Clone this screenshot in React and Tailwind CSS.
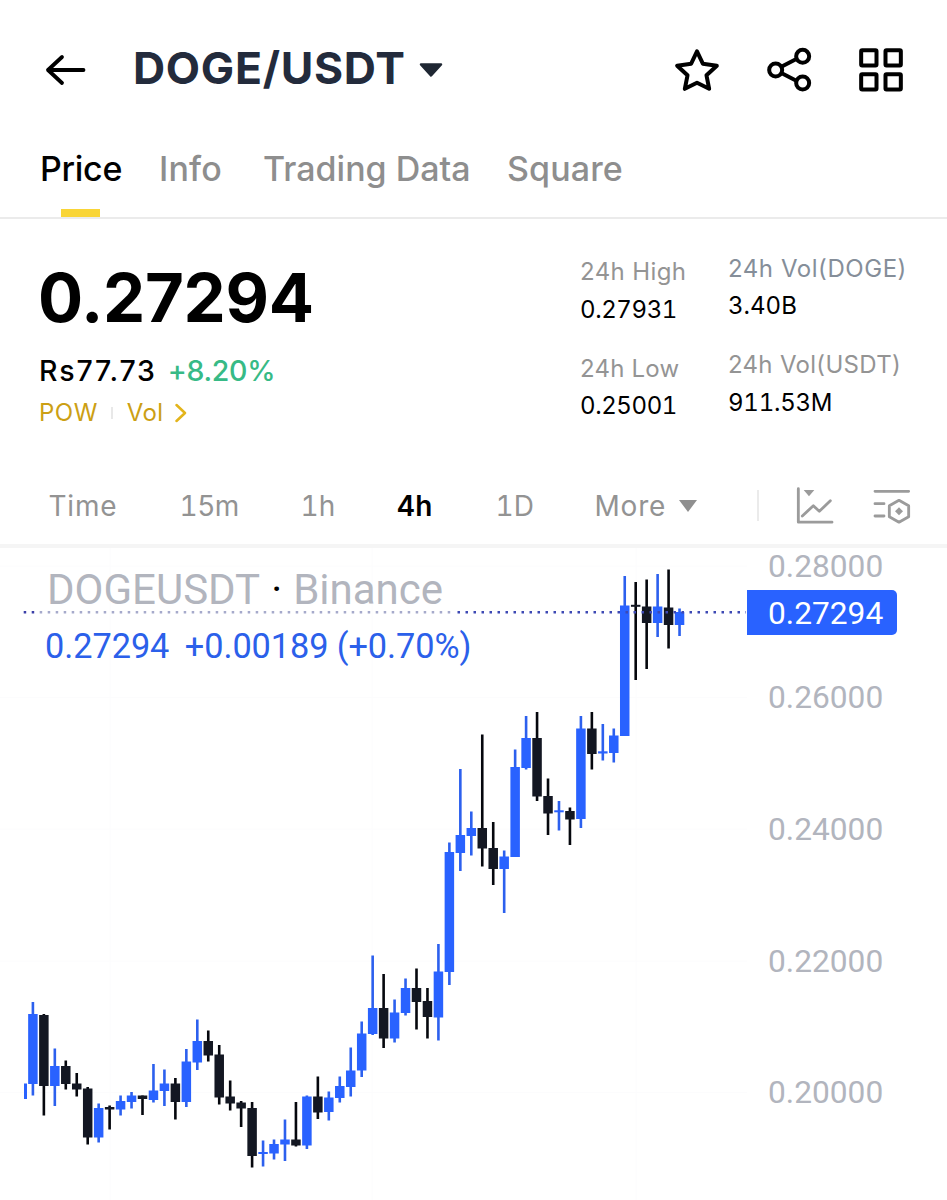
import React from 'react';

const BLUE = '#2962ff';
const BLACK = '#131722';

// [direction, bodyTop, bodyBottom, wickTop, wickBottom]
const CANDLES = [
  ['u', 1014, 1084, 1002, 1095.5],
  ['d', 1015, 1086, 1014, 1115.5],
  ['u', 1066, 1086, 1048.5, 1106],
  ['d', 1066, 1084, 1060.5, 1089.5],
  ['d', 1083.5, 1089.5, 1073, 1096.5],
  ['d', 1088.5, 1137.5, 1087, 1144.5],
  ['u', 1108, 1137.5, 1103.5, 1142.5],
  ['d', 1107, 1109.5, 1105.5, 1129.5],
  ['u', 1101, 1109.5, 1095.5, 1115.5],
  ['u', 1095.5, 1102, 1092, 1108.5],
  ['d', 1095.5, 1099, 1095.5, 1115],
  ['u', 1090.5, 1100, 1064, 1102.5],
  ['u', 1083.5, 1091, 1069.5, 1106],
  ['d', 1083.5, 1102, 1078, 1119.5],
  ['u', 1061.5, 1102, 1049, 1107],
  ['u', 1041, 1062.5, 1019.5, 1070],
  ['d', 1041, 1055.5, 1030.5, 1061.5],
  ['d', 1054.5, 1097.5, 1045, 1104.5],
  ['d', 1096.5, 1103.5, 1080.5, 1110.5],
  ['d', 1102.5, 1108.5, 1101, 1127],
  ['d', 1108, 1156, 1102, 1167.5],
  ['u', 1152, 1154, 1140.5, 1166.5],
  ['u', 1144, 1153.5, 1139.5, 1159.5],
  ['u', 1139.5, 1144.5, 1119.5, 1161],
  ['d', 1139.5, 1145.5, 1102, 1146.5],
  ['u', 1096.5, 1145.5, 1095.5, 1149],
  ['d', 1096.5, 1112.5, 1076.5, 1119],
  ['u', 1097.5, 1112, 1091.5, 1120.5],
  ['u', 1086, 1098, 1076.5, 1102.5],
  ['u', 1070.5, 1087, 1047.5, 1096.5],
  ['u', 1033.5, 1070.5, 1021.5, 1077],
  ['u', 1008, 1034, 955.5, 1035],
  ['d', 1008, 1038.5, 974, 1048],
  ['u', 1012.5, 1038.5, 999.5, 1042.5],
  ['u', 988, 1013, 978.5, 1015.5],
  ['d', 988, 1002, 968.5, 1029.5],
  ['d', 1001, 1017, 988, 1038.5],
  ['u', 971.5, 1017.5, 944, 1040.5],
  ['u', 852, 972, 842.5, 985],
  ['u', 835, 853, 769, 871],
  ['u', 828, 836, 811.5, 855.5],
  ['d', 828, 848.5, 734.5, 866.5],
  ['d', 848, 869, 822, 885],
  ['u', 856.5, 869, 850.5, 913],
  ['u', 767, 857, 749.5, 857],
  ['u', 738, 768, 716, 769.5],
  ['d', 738, 796.5, 712, 801],
  ['d', 796, 813.5, 778.5, 835],
  ['u', 810.3, 812.3, 801, 830.5],
  ['d', 811, 819.5, 807.5, 845],
  ['u', 728.5, 819, 716, 828],
  ['d', 728.5, 754, 712, 769.5],
  ['u', 751.3, 753.5, 724, 760.5],
  ['u', 735.5, 753, 728.5, 762.5],
  ['u', 605.5, 736, 576, 736],
  ['d', 604.8, 606.8, 582, 680],
  ['d', 606.5, 623, 579.5, 669],
  ['u', 606.5, 623, 574, 637],
  ['d', 607.5, 625, 569.5, 648.5],
  ['u', 612, 625, 608.5, 636],
];

function Header() {
  return (
    <header className="flex h-[140px] items-center pl-11 pr-[43px]">
      <svg className="h-10 w-11 shrink-0" viewBox="44 50 44 40" fill="none" stroke="#000" strokeWidth="3.8" strokeLinecap="round" strokeLinejoin="round">
        <path d="M83.5 70H48M62 57L48 70L62 83" />
      </svg>
      <div className="flex w-[355px] items-center pl-[45px]">
        <h1 className="w-[274px] whitespace-nowrap pb-1 text-[44.500px] font-bold leading-[60px] tracking-[0.700px] text-[#232b3c]">DOGE/USDT</h1>
        <svg className="ml-3 h-4 w-6 shrink-0" viewBox="0 0 24 16" fill="#1f2733" stroke="#1f2733" strokeWidth="2.5" strokeLinejoin="round">
          <path d="M2 2.500H22L12 13.500Z" />
        </svg>
      </div>
      <div className="ml-auto flex items-center gap-[46px]">
        <svg className="h-[46px] w-[46px]" viewBox="582 82 138 138" fill="none" stroke="#000" strokeWidth="12" strokeLinejoin="round">
          <path d="M651 95L668.500 132L710.500 138L679.500 167L687.500 207.500L651 189L614.500 207.500L622.500 167L591.500 138L633.500 132Z" />
        </svg>
        <svg className="h-[46px] w-[46px]" viewBox="858 82 138 138" fill="none" stroke="#000" strokeWidth="12">
          <circle cx="887" cy="151" r="19.500" />
          <circle cx="968" cy="110" r="19.500" />
          <circle cx="968" cy="190" r="19.500" />
          <path d="M904 141L949 118M904 160L949 183" />
        </svg>
        <svg className="h-[46px] w-[46px]" viewBox="1135 82 138 138" fill="none" stroke="#000" strokeWidth="12">
          <rect x="1144.500" y="91.500" width="46" height="46" rx="3" />
          <rect x="1217.500" y="91.500" width="46" height="46" rx="3" />
          <rect x="1144.500" y="163.500" width="46" height="46" rx="3" />
          <rect x="1217.500" y="163.500" width="46" height="46" rx="3" />
        </svg>
      </div>
    </header>
  );
}

function Tabs() {
  return (
    <nav className="grid h-[79px] grid-cols-[119px_104px_244px_1fr] border-b-2 border-[#ebebeb] pl-[40px] text-[34px] font-medium leading-[57px] text-[#8e8e8e]">
      <div className="flex flex-col">
        <span className="tracking-[-0.300px] text-black">Price</span>
        <span className="ml-[20.500px] mt-3 h-2 w-[39.500px] bg-[#f9d537]" />
      </div>
      <span className="tracking-[0.2px]">Info</span>
      <span>Trading Data</span>
      <span className="tracking-[0.100px]">Square</span>
    </nav>
  );
}

function Stat({ label, value, labelClass, valueClass }) {
  return (
    <div className="flex h-[96.500px] flex-col gap-[7.500px] whitespace-nowrap text-[24px] leading-[30px]">
      <span className={labelClass}>{label}</span>
      <span className={'text-black tabular-nums ' + valueClass}>{value}</span>
    </div>
  );
}

function Summary() {
  return (
    <section className="flex h-[247px]">
      <div className="w-[580px] pl-[38px] pt-[39px]">
        <div className="text-[67px] font-bold leading-[80px] tracking-[-0.3px] text-black">0.27294</div>
        <div className="mt-3 flex gap-[11px] pl-px text-[28.500px] font-medium leading-[41px]">
          <span className="tracking-[1.8px] text-black">Rs77.73</span>
          <span className="tracking-[-0.300px] text-[#37ba86]">+8.20%</span>
        </div>
        <div className="mt-[7px] flex items-center pl-px text-[24px] leading-[30px] text-[#cc9f14]">
          <span className="tracking-[0.5px]">POW</span>
          <span className="ml-[13px] h-3 w-0.5 bg-[#e8e8e8]" />
          <span className="ml-[14px] tracking-[0.4px]">Vol</span>
          <svg className="ml-[11px] h-5 w-3" viewBox="0 0 12 20" fill="none" stroke="#e3b41b" strokeWidth="2.500" strokeLinecap="round" strokeLinejoin="round">
            <path d="M1.500 2L10 10L1.500 18" />
          </svg>
        </div>
      </div>
      <div className="w-[148px] pt-[38px]">
        <Stat label="24h High" value="0.27931" labelClass="text-[#949494] tracking-[0.4px]" valueClass="tracking-[-0.400px]" />
        <Stat label="24h Low" value="0.25001" labelClass="text-[#949494] tracking-[0.2px]" valueClass="tracking-[-0.400px]" />
      </div>
      <div className="pt-[34.500px]">
        <Stat label="24h Vol(DOGE)" value="3.40B" labelClass="text-[#858e99] tracking-[0.550px]" valueClass="tracking-[0px]" />
        <Stat label="24h Vol(USDT)" value="911.53M" labelClass="text-[#949494] tracking-[0.3px]" valueClass="tracking-[-0.250px]" />
      </div>
    </section>
  );
}

function Intervals() {
  return (
    <div className="grid h-[82px] grid-cols-[131px_121px_96px_99px_99px_84px_78px_39px_77px_1fr] items-center border-b-4 border-[#f5f5f5] pl-[48.500px] pt-px text-[28px] leading-[40px] text-[#939393]">
      <span className="tracking-[0.800px]">Time</span>
      <span className="tracking-[-0.500px] tabular-nums">15m</span>
      <span className="tabular-nums">1h</span>
      <span className="font-semibold text-black">4h</span>
      <span className="tabular-nums">1D</span>
      <span className="tracking-[0.8px]">More</span>
      <svg className="h-3 w-[18px]" viewBox="0 0 18 12" fill="#8f8f8f">
        <path d="M0 0H18L9 12Z" />
      </svg>
      <span className="h-[31px] w-0.5 bg-[#ebebeb]" />
      <svg className="h-[38px] w-[38px]" viewBox="707 79 114 114" fill="none" stroke="#9b9b9b" strokeWidth="8.500" strokeLinecap="round" strokeLinejoin="round">
        <path d="M714 84V184.500H815M726 166L759 135L777 152L810 120" />
        <path d="M730 88H762L746 107Z" fill="#9b9b9b" stroke="none" />
      </svg>
      <svg className="h-[38px] w-[38px]" viewBox="938 79 114 114" fill="none" stroke="#9b9b9b" strokeWidth="8.500" strokeLinecap="round" strokeLinejoin="round">
        <path d="M944 92H1045M944 129H971M944 166H971M1016 119L1045 135.500V168L1016 184.500L987 168V135.500Z" />
        <path d="M1016 140L1028 152L1016 164L1004 152Z" fill="#9b9b9b" stroke="none" />
      </svg>
    </div>
  );
}

function Candles() {
  return (
    <svg className="h-[652px] w-[747px] shrink-0" viewBox="0 548 747 652">
      <g stroke="#fcfcfd" strokeWidth="1">
        <path d="M110 548V1200M372 548V1200M636 548V1200M0 566H747M0 697.500H747M0 829H747M0 961H747M0 1092.500H747" />
      </g>
      <rect x="24" y="1083.500" width="3" height="15.500" fill={BLUE} />
      {CANDLES.map(([dir, top, bottom, high, low], i) => {
        const x = 32.9 + 10.96 * i;
        const fill = dir === 'u' ? BLUE : BLACK;
        return (
          <g key={i}>
            <rect x={x - 1.3} y={high} width="2.6" height={low - high} fill={dir === 'u' ? '#2c60ee' : '#05070d'} />
            <rect x={x - 4.75} y={top} width="9.500" height={bottom - top} fill={fill} />
          </g>
        );
      })}
      <path d="M23.700 612.300H38" stroke="#3b3fa8" strokeWidth="2.500" strokeDasharray="2.500 5.500" />
      <path d="M39.700 612.300H455" stroke="#a6aacb" strokeWidth="2.500" strokeDasharray="2.500 5.500" />
      <path d="M457.500 612.300H746" stroke="#3d49b4" strokeWidth="2.500" strokeDasharray="2.500 5.500" />
    </svg>
  );
}

function Chart() {
  return (
    <section className="relative flex h-[652px] overflow-hidden font-['Roboto']">
      <Candles />
      <div className="flex flex-col gap-[95.700px] pl-[21px] pt-[0.600px] text-[31.700px] leading-[36px] text-[#b2b5be]">
        {['0.28000', '0.26000', '0.24000', '0.22000', '0.20000'].map((p) => (
          <span key={p}>{p}</span>
        ))}
      </div>
      <div className="absolute left-[747px] top-[42px] h-[44.500px] w-[150px] rounded-r-[5px] bg-[#2962ff] pl-[21px] text-[31.700px] leading-[47px] text-white">0.27294</div>
      <div className="absolute left-[45px] top-[17px] whitespace-pre">
        <div className="flex pl-[2px] text-[42px] leading-[50px] text-[#b2b5be]">
          <span>DOGEUSDT</span>
          <span className="w-[33px] text-center text-black">·</span>
          <span>Binance</span>
        </div>
        <div className="mt-[10px] flex gap-[15.500px] text-[34.300px] leading-[42px] text-[#2b60ea]">
          <span className="tracking-[-0.050px]">0.27294</span>
          <span className="tracking-[-0.080px]">+0.00189 (+0.70%)</span>
        </div>
      </div>
    </section>
  );
}

export default function App() {
  return (
    <main className="h-[1200px] w-[947px] overflow-hidden bg-white font-['Inter',sans-serif]">
      <Header />
      <Tabs />
      <Summary />
      <Intervals />
      <Chart />
    </main>
  );
}
